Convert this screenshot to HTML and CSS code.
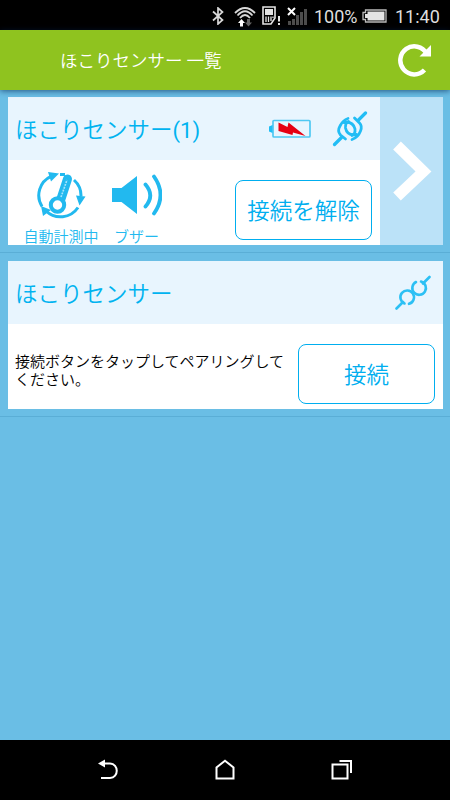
FILE: index.html
```html
<!DOCTYPE html>
<html lang="ja">
<head>
    <meta charset="UTF-8">
    <meta name="viewport" content="width=device-width, initial-scale=1.0">
    <title>ほこりセンサー 一覧</title>
    <link rel="stylesheet" href="styles.css">
</head>
<body>
    <div id="con">
        <div class="status">
            <svg class="bt" width="12" height="18" viewBox="0 0 12 18"><path d="M1 4.500l9.500 8.500L6 17V1l4.500 4L1 13.500" fill="none" stroke="#d8d8d8" stroke-width="1.700"/></svg>
            <svg class="wifi" width="22" height="21" viewBox="0 0 22 21">
                <path d="M1 7Q11-3 21 7M3.500 9.500Q11 1 18.500 9.500M6 12Q11 6 16 12" fill="none" stroke="#d8d8d8" stroke-width="1.800"/>
                <path d="M7.500 13l3.500 4H9v3.500H6V17H4z" fill="#fff"/>
                <path d="M14.500 20.500L11 16.500h2V13h3v3.500h2z" fill="#666"/>
            </svg>
            <svg class="sim" width="19" height="20" viewBox="0 0 19 20">
                <path d="M1 1h12v11l-4 6H1z" fill="none" stroke="#e4e4e4" stroke-width="1.600"/>
                <path d="M3 3h8v6H3z" fill="#e4e4e4"/>
                <path d="M4 10.500V16M6.500 10.500V16M9 10.500V15M11 10.500V12" stroke="#e4e4e4" stroke-width="1.300"/>
                <path d="M17 10v5.500M17 17v2" stroke="#e4e4e4" stroke-width="2"/>
            </svg>
            <svg class="signal" width="20" height="18" viewBox="0 0 20 18">
                <path d="M1 14h3v4H1zM5 12h3v6H5zM9 8h3v10H9zM13 5h3v13h-3zM17 2h3v16h-3z" fill="#4d4d4d"/>
                <path d="M1 1l7 7M8 1L1 8" stroke="#fff" stroke-width="2"/>
            </svg>
            <span class="percent">100%</span>
            <svg class="power" width="25" height="14" viewBox="0 0 25 14">
                <path d="M3.500 1h20.500v12H3.500v-2.500H1v-7h2.500z" fill="none" stroke="#bbb" stroke-width="1.300"/>
                <path d="M5.500 2.500H22.500v9H5.500V9H3V5h2.500z" fill="#e4e4e4"/>
            </svg>
            <span class="time">11:40</span>
        </div>

        <div class="title">
            <h1>ほこりセンサー 一覧</h1>
            <svg class="reload" width="34" height="34" viewBox="0 0 34 34">
                <path d="M26.500 27A14 14 0 1 1 28.500 10.500" fill="none" stroke="#fff" stroke-width="4.500"/>
                <path d="M33 2v11.500H21.500z" fill="#fff"/>
            </svg>
        </div>

        <ul class="list">
            <li>
                <div class="card">
                    <div class="main">
                        <div class="card-top">
                            <h2>ほこりセンサー<span>(1)</span></h2>
                            <svg class="battery" width="42" height="20" viewBox="0 0 42 20">
                                <rect x="4" y="1.500" width="37" height="16.500" rx="1" fill="none" stroke="#4fc8f2" stroke-width="1.700"/>
                                <path d="M0 7.500L3.500 6v8L0 12.500z" fill="#1fbdf5"/>
                                <path d="M9.500 3.500l9 4.500 1-4.500L36.500 17 24 13.500 23.500 16 9.500 12z" fill="#e60012"/>
                            </svg>
                            <svg class="link" width="36" height="36" viewBox="0 0 36 36" fill="none" stroke="#22bdf5" stroke-width="2.800" stroke-linecap="round">
                                <path d="M2.500 33.500L9.500 26.500M33.500 2L26.500 9" stroke-width="3.200"/>
                                <path d="M13.500 28L8.500 24Q5 20 8 15Q11 9 16 7.500"/>
                                <path d="M22.500 7L27.500 12Q30.500 15 28.500 20Q26 26.500 20 28.500"/>
                                <path d="M12 11.500Q21 10 23 18Q23.500 23 20 24.500"/>
                                <path d="M24.500 23.500Q15 25 13.500 17Q13 12 16.500 10.500"/>
                            </svg>
                        </div>
                        <div class="card-body">
                            <div class="item">
                                <svg width="50" height="48" viewBox="0 0 50 48" fill="none" stroke="#22b9ef">
                                    <path d="M6 34.500A21 21 0 0 1 15 4.300M24 2.500h5M38 8A21 21 0 0 1 45 24M42 35.500A21 21 0 0 1 10 39" stroke-width="3"/>
                                    <path d="M12 0l11 1.500L15 9.500zM40 23.500l9.500 1-6 9zM5 34l10 4-8 6z" fill="#22b9ef" stroke="none"/>
                                    <path d="M23 33l8.500-26" stroke-width="9" stroke-linecap="round"/>
                                    <path d="M24 28l7-20" stroke="#a5e5fc" stroke-width="1.600" stroke-dasharray="2 1"/>
                                    <circle cx="21.500" cy="33" r="6.700" fill="#fff" stroke-width="4"/>
                                </svg>
                                <span>自動計測中</span>
                            </div>
                            <div class="item buzzer">
                                <svg width="50" height="48" viewBox="0 0 50 48">
                                    <path d="M0 17h9.500L25 5v38L9.500 31H0z" fill="#22b9ef"/>
                                    <path d="M33.500 13.500q9.500 11 0 22M42 5.500q13 18.500 0 37" fill="none" stroke="#22b9ef" stroke-width="3.800" stroke-linecap="round"/>
                                </svg>
                                <span>ブザー</span>
                            </div>
                            <button class="btn">接続を解除</button>
                        </div>
                    </div>
                    <div class="next">
                        <svg width="40" height="60" viewBox="0 0 40 60"><path d="M5 4.500L31.500 30.500 5 55.500" fill="none" stroke="#fff" stroke-width="11"/></svg>
                    </div>
                </div>
            </li>
            <li>
                <div class="card">
                    <div class="main">
                        <div class="card-top">
                            <h2>ほこりセンサー</h2>
                            <svg class="link" width="36" height="36" viewBox="0 0 36 36" fill="none" stroke="#2cc0f4" stroke-width="2.600" stroke-linecap="round">
                                <path d="M1.500 33.500l6.500-6.500M34.500 2L28 8.500"/>
                                <path d="M9.500 28.500A6.800 6.800 0 1 1 14 28.800"/>
                                <path d="M26 6.500A6.800 6.800 0 1 1 21 7"/>
                            </svg>
                        </div>
                        <div class="card-body">
                            <p>接続ボタンをタップしてペアリングしてください。</p>
                            <button class="btn">接続</button>
                        </div>
                    </div>
                </div>
            </li>
        </ul>

        <div class="nav">
            <svg width="24" height="22" viewBox="0 0 24 22"><path d="M5 4.500h9c9 0 9 14.500 0 14.500H5" fill="none" stroke="#fff" stroke-width="2"/><path d="M2 4.500L9 .5v8z" fill="#fff"/></svg>
            <svg width="24" height="22" viewBox="0 0 24 22"><path d="M3.500 19.500V8.500L12 1.700l8.500 6.800v11z" fill="none" stroke="#fff" stroke-width="2"/></svg>
            <svg width="24" height="22" viewBox="0 0 24 22"><path d="M2.500 5.500h15v14h-15zM9.500 2h11.500v12" fill="none" stroke="#fff" stroke-width="2"/></svg>
        </div>
    </div>
</body>
</html>
```
FILE: styles.css
```css
*{
    margin:0;
    padding:0;
    box-sizing: border-box;
}
body{
    font-family: "Noto Sans CJK JP", sans-serif;
    font-weight: 350;
    background: #6abee5;
}
svg{
    display: block;
    flex:none;
}
#con{
    display: flex;
    flex-direction: column;
    width:450px;
    height:800px;
    overflow: hidden;
}
/* 状态栏 */
.status{
    display: flex;
    align-items: center;
    height:30px;
    flex:none;
    padding:2px 10px 0 212px;
    background: #000;
    color:#dedede;
    font-family: Roboto, sans-serif;
    font-size:18px;
    font-weight: 400;
}
.wifi{
    margin-left:10px;
}
.sim{
    margin-left:6px;
}
.signal{
    margin-left:6px;
}
.percent{
    width:43px;
    margin-left:7px;
}
.power{
    margin-left:5px;
}
.time{
    margin-left:8px;
}
.title{
    display: flex;
    align-items: center;
    justify-content: space-between;
    height:60px;
    flex:none;
    padding:0 18px 0 60px;
    background: #8fc31f;
    box-shadow: 0 1px 6px rgba(0, 30, 80, .65);
    z-index: 1;
}
.title h1{
    padding-bottom:2px;
    color:#fff;
    font-size:17.5px;
    font-weight: 350;
}
.list{
    flex:1;
    list-style: none;
}
.list li{
    height:163px;
    padding:7px 7px 7px 8px;
    border-bottom: 1px solid #5aaed6;
}
.list li+li{
    height:164px;
    padding-top:8px;
}
.card{
    display: flex;
    height:148px;
    background: #fff;
}
.main{
    flex:1;
}
.card-top{
    display: flex;
    align-items: center;
    height:63px;
    padding:0 12px 0 7px;
    background: #e8f5fe;
}
.card-top h2{
    flex:1;
    padding-bottom:2px;
    color:#00b3f0;
    font-size:22.5px;
    font-weight: 350;
}
.card-top h2 span{
    font-family: Roboto, sans-serif;
    font-size:22px;
    font-weight: 400;
}
.battery{
    margin-right:21px;
}
.card-body{
    display: flex;
    height:85px;
    padding:20px 8px 0 7px;
}
.item{
    width:92px;
    margin-top:-8px;
    color:#22b9ef;
    font-size:15px;
    line-height: 18px;
    white-space: nowrap;
}
.item svg{
    margin:0 auto;
}
.buzzer{
    width:59px;
    margin-top:-9px;
}
.item span{
    display: block;
    padding-top:7px;
    text-align: center;
}
.buzzer span{
    padding-top:8px;
}
.btn{
    width:137px;
    height:60px;
    flex:none;
    margin-left:auto;
    padding-bottom:3px;
    border:1px solid #00aeef;
    border-radius: 8px;
    background: #fff;
    color:#00aeef;
    font: inherit;
    font-size:22.5px;
}
.card-body p{
    width:271px;
    padding-top:8px;
    color:#000;
    font-size:15px;
    line-height: 18px;
}
.next{
    width:63px;
    padding:44px 0 0 12px;
    background: #bbe2f8;
}
.nav{
    display: flex;
    align-items: center;
    justify-content: center;
    gap:93px;
    height:60px;
    flex:none;
    background: #000;
}
```
